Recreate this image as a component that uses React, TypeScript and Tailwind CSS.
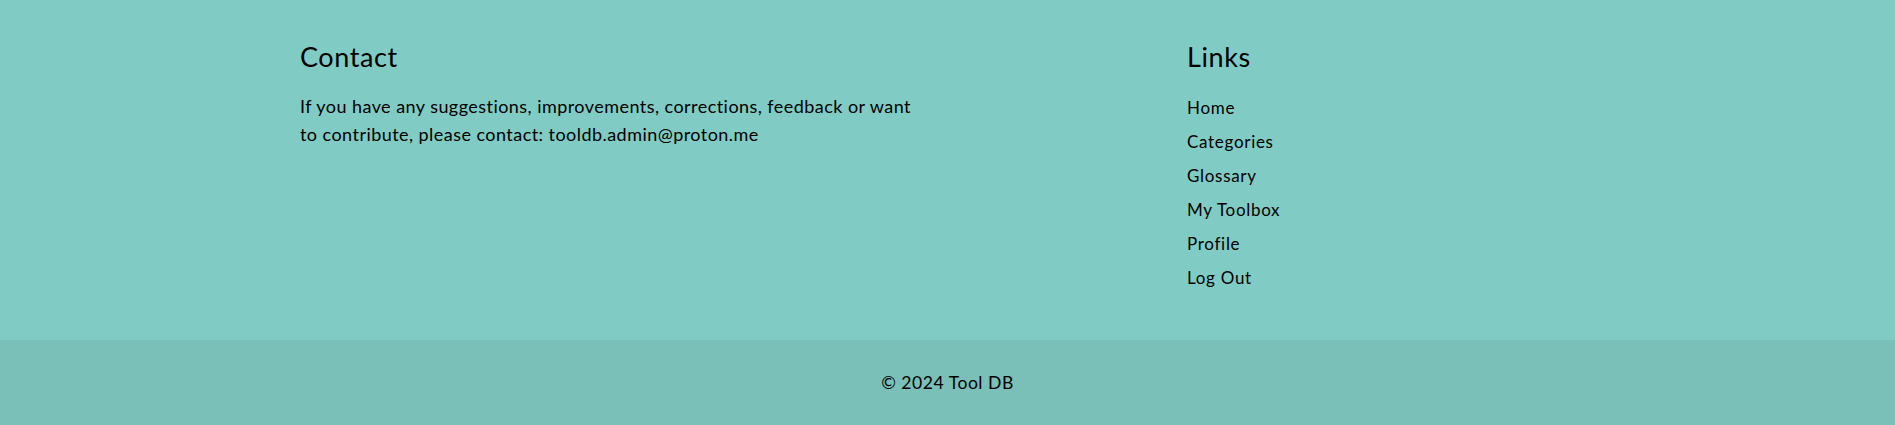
const links = ['Home', 'Categories', 'Glossary', 'My Toolbox', 'Profile', 'Log Out'];

export default function App() {
  return (
    <footer
      className="w-full bg-[#80cbc4] text-black"
      style={{ fontFamily: 'Lato, "Noto Sans", sans-serif' }}
    >
      <div className="mx-auto flex w-[1295px] pt-[42px] pb-[45px]">
        <div className="w-[625px]">
          <h5 className="text-[27px] leading-[29px] tracking-[0.6px]">Contact</h5>
          <p className="mt-[21px] text-[18px] leading-[28px] tracking-[0.45px]">
            If you have any suggestions, improvements, corrections, feedback or want to contribute,
            please contact: tooldb.admin@proton.me
          </p>
        </div>
        <div className="ml-[262px]">
          <h5 className="text-[27px] leading-[29px] tracking-[0.6px]">Links</h5>
          <ul className="mt-[20px] flex flex-col">
            {links.map((l) => (
              <li key={l} className="text-[17px] leading-[34px] tracking-[0.7px]">
                <a href="#">{l}</a>
              </li>
            ))}
          </ul>
        </div>
      </div>
      <div className="flex h-[87px] items-center justify-center bg-[rgba(51,51,51,0.08)] text-[17.6px] tracking-[0.5px]">
        © 2024 Tool DB
      </div>
    </footer>
  );
}
